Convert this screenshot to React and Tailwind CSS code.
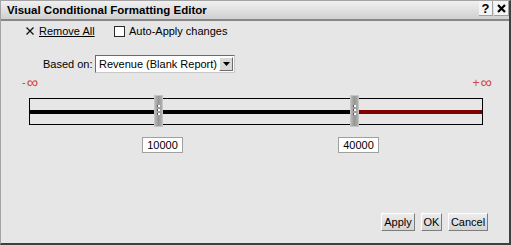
import React from 'react';

const Handle = ({ left }) => (
  <div
    className={`absolute top-0 ${left} w-[9px] h-[32px] border border-[#c4c4c4] bg-linear-to-r from-[#b8b8b8] via-[#969696] to-[#b0b0b0]`}
  >
    <div className="absolute left-[2px] top-[9px] flex flex-col gap-[2px]">
      {[0, 1, 2].map((i) => (
        <div key={i} className="flex">
          <div className="w-px h-[2px] bg-[#555]" />
          <div className="w-[2px] h-[2px] bg-white" />
        </div>
      ))}
    </div>
  </div>
);

const DlgButton = ({ w, children }) => (
  <button
    className={`${w} h-[18px] flex items-center justify-center text-[11px] leading-none text-black bg-linear-to-b from-[#ececec] to-[#d4d4d4] border border-t-white border-l-white border-r-[#7c7c7c] border-b-[#7c7c7c]`}
  >
    {children}
  </button>
);

export default function App() {
  return (
    <div className="w-[512px] h-[246px] bg-[#d6d6d6] font-['Liberation_Sans',Arial,sans-serif] text-black">
      <div className="w-[511px] h-[245px] flex flex-col bg-[#e6e6e6] border-l border-t border-[#a4a4a4] border-r-2 border-b-2 border-r-[#404040] border-b-[#404040]">
        {/* Title bar */}
        <div className="h-[20px] flex items-start justify-between bg-linear-to-b from-[#f0f0f0] to-[#d0d0d0] border-b-2 border-[#868686]">
          <span className="pl-[6px] text-[11.5px] leading-[18px] font-bold">
            Visual Conditional Formatting Editor
          </span>
          <div className="flex gap-px">
            <div className="w-[14px] h-[15px] flex items-center justify-center bg-[#f4f4f4] border-r border-b border-[#a0a0a0] text-[13px] font-bold leading-none">
              ?
            </div>
            <div className="w-[15px] h-[15px] flex items-center justify-center bg-[#f4f4f4] border-r border-b border-[#a0a0a0]">
              <svg width="9" height="9" viewBox="0 0 9 9">
                <path d="M1 1 L8 8 M8 1 L1 8" stroke="#000" strokeWidth="2.2" />
              </svg>
            </div>
          </div>
        </div>

        {/* Remove all / auto-apply */}
        <div className="mt-[3px] h-[14px] flex items-center pl-[25px] text-[11px] leading-[14px]">
          <div className="w-[13px] flex items-center">
            <svg width="8" height="8" viewBox="0 0 8 8">
              <path d="M0.5 0.5 L7.5 7.5 M7.5 0.5 L0.5 7.5" stroke="#111" strokeWidth="1.3" />
            </svg>
          </div>
          <span className="w-[75px] underline underline-offset-1">Remove All</span>
          <div className="w-[11px] h-[11px] border border-[#2a2a2a] bg-white" />
          <span className="ml-[4px]">Auto-Apply changes</span>
        </div>

        {/* Based on */}
        <div className="mt-[17px] h-[18px] flex items-center pl-[42px] text-[11px]">
          <span className="w-[52px]">Based on:</span>
          <div className="w-[140px] h-[18px] flex items-center justify-between bg-white border border-t-[#6c6c6c] border-l-[#6c6c6c] border-r-[#c8c8c8] border-b-[#c8c8c8] pl-[3px] pr-px">
            <span className="leading-none">Revenue (Blank Report)</span>
            <div className="w-[14px] h-[14px] flex items-center justify-center bg-[#d8d8d8] border border-t-white border-l-white border-r-[#6c6c6c] border-b-[#6c6c6c]">
              <svg width="7" height="4" viewBox="0 0 7 4">
                <path d="M0 0 H7 L3.5 4 Z" fill="#000" />
              </svg>
            </div>
          </div>
        </div>

        {/* infinity labels */}
        <div className="mt-[3px] h-[13px] flex items-center justify-between pl-[21px] pr-[17px] text-[#d04444]">
          <span className="flex items-center gap-px">
            <span className="text-[11px] leading-none">-</span>
            <span className="text-[16px] leading-none">∞</span>
          </span>
          <span className="flex items-center gap-px">
            <span className="text-[12px] leading-none">+</span>
            <span className="text-[16px] leading-none">∞</span>
          </span>
        </div>

        {/* slider */}
        <div className="relative ml-[28px] mt-[6px] w-[454px] h-[32px]">
          <div className="mt-[3px] h-[27px] border border-black flex items-center">
            <div className="w-[329px] h-[4px] bg-black" />
            <div className="flex-1 h-[4px] bg-[#800000]" />
          </div>
          <Handle left="left-[125px]" />
          <Handle left="left-[321px]" />
        </div>

        {/* values */}
        <div className="mt-[10px] flex pl-[141px] text-[11px]">
          <div className="w-[41px] h-[16px] flex items-center justify-center bg-white border border-[#a0a0a0]">
            10000
          </div>
          <div className="ml-[155px] w-[41px] h-[16px] flex items-center justify-center bg-white border border-[#a0a0a0]">
            40000
          </div>
        </div>

        {/* buttons */}
        <div className="mt-auto pb-[12px] pr-[21px] flex justify-end gap-[6px]">
          <DlgButton w="w-[34px]">Apply</DlgButton>
          <DlgButton w="w-[21px]">OK</DlgButton>
          <DlgButton w="w-[40px]">Cancel</DlgButton>
        </div>
      </div>
    </div>
  );
}
